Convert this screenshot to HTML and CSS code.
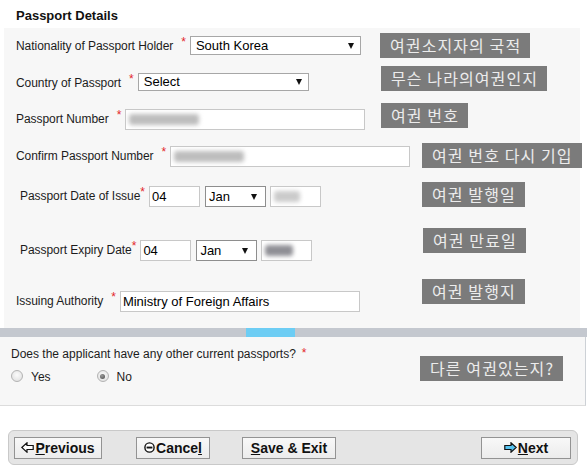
FILE: index.html
```html
<!DOCTYPE html>
<html lang="en">
<head>
<meta charset="utf-8">
<title>Passport Details</title>
<link rel="stylesheet" href="styles.css">
</head>
<body>
<h2 class="title">Passport Details</h2>

<div class="panel">
  <div class="row row-1">
    <span class="label">Nationality of Passport Holder</span><span class="req">*</span>
    <div class="field select select-wide"><span>South Korea</span><i class="caret"></i></div>
    <span class="note note-1">여권소지자의 국적</span>
  </div>

  <div class="row row-2">
    <span class="label">Country of Passport</span><span class="req">*</span>
    <div class="field select select-wide select-short"><span>Select</span><i class="caret"></i></div>
    <span class="note note-2">무슨 나라의여권인지</span>
  </div>

  <div class="row row-3">
    <span class="label">Passport Number</span><span class="req">*</span>
    <div class="field input-wide"><span class="blur"></span></div>
    <span class="note note-3">여권 번호</span>
  </div>

  <div class="row row-4">
    <span class="label">Confirm Passport Number</span><span class="req">*</span>
    <div class="field input-wide"><span class="blur"></span></div>
    <span class="note note-4">여권 번호 다시 기입</span>
  </div>

  <div class="row row-5">
    <span class="label label-indent">Passport Date of Issue</span><span class="req req-tight">*</span>
    <div class="field date-day">04</div>
    <div class="field select date-month"><span>Jan</span><i class="caret"></i></div>
    <div class="field date-year"><span class="blur blur-year"></span></div>
    <span class="note note-5">여권 발행일</span>
  </div>

  <div class="row row-6">
    <span class="label label-indent">Passport Expiry Date</span><span class="req req-tight">*</span>
    <div class="field date-day">04</div>
    <div class="field select date-month"><span>Jan</span><i class="caret"></i></div>
    <div class="field date-year"><span class="blur blur-year blur-dark"></span></div>
    <span class="note note-6">여권 만료일</span>
  </div>

  <div class="row row-7">
    <span class="label">Issuing Authority</span><span class="req">*</span>
    <div class="field input-wide">Ministry of Foreign Affairs</div>
    <span class="note note-7">여권 발행지</span>
  </div>
</div>

<div class="progress"><div class="progress-fill"></div></div>

<div class="panel-q">
  <div class="question">Does the applicant have any other current passports?<span class="req req-q">*</span></div>
  <div class="radios">
    <span class="radio"></span><span class="radio-text radio-text-yes">Yes</span>
    <span class="radio radio-checked"></span><span class="radio-text">No</span>
  </div>
  <span class="note note-8">다른 여권있는지?</span>
</div>

<div class="actions">
  <button class="btn btn-prev">
    <svg width="13" height="11" viewBox="0 0 13 11"><path d="M0.8 5.5 L6 0.8 V3.5 H12.2 V7.5 H6 V10.2 Z" fill="#fff" stroke="#111" stroke-width="1.2" stroke-linejoin="miter"/></svg><span><u>P</u>revious</span>
  </button>
  <button class="btn btn-cancel">
    <svg width="11" height="11" viewBox="0 0 11 11"><circle cx="5.5" cy="5.5" r="4.6" fill="#fff" stroke="#111" stroke-width="1.4"/><rect x="2.6" y="4.6" width="5.8" height="1.9" fill="#111"/></svg><span>Cance<u>l</u></span>
  </button>
  <button class="btn btn-save"><span><u>S</u>ave &amp; Exit</span></button>
  <button class="btn btn-next">
    <svg width="13" height="11" viewBox="0 0 13 11"><path d="M12.2 5.5 L7 0.8 V3.5 H0.8 V7.5 H7 V10.2 Z" fill="#56c3f0" stroke="#111" stroke-width="1.2" stroke-linejoin="miter"/></svg><span><u>N</u>ext</span>
  </button>
</div>
</body>
</html>
```

FILE: styles.css
```css
* { box-sizing: border-box; }

html, body {
  margin: 0;
  padding: 0;
}

body {
  width: 587px;
  height: 470px;
  overflow: hidden;
  background: #ffffff;
  font-family: "Liberation Sans", Arial, sans-serif;
  color: #1c1c1c;
}

.title {
  margin: 0;
  height: 28px;
  padding: 8px 0 0 16px;
  font-size: 13px;
  line-height: 16px;
  font-weight: bold;
  color: #111;
}

/* ---------- main form panel ---------- */
.panel {
  margin: 0 7px 0 4px;
  height: 300px;
  padding: 8px 0 0 12px;
  background: #f7f7f7;
}

.row {
  position: relative;
  display: flex;
  align-items: flex-start;
}

.row-1 { height: 37px; }
.row-2 { height: 36px; }
.row-3 { height: 37px; }
.row-4 { height: 40px; }
.row-5 { height: 54px; }
.row-6 { height: 51px; }
.row-7 { height: 21px; }

.label {
  font-size: 12px;
  line-height: 14px;
  letter-spacing: -0.05px;
  padding-top: 3px;
  white-space: nowrap;
}

.label-indent { margin-left: 4px; }

.req {
  color: #e3262b;
  font-size: 12px;
  line-height: 12px;
  margin: 0 4px 0 8px;
}

.req-tight { margin: 0 4px 0 0; }

.field {
  height: 21px;
  border: 1px solid #c8c8c8;
  background: #ffffff;
  font-size: 13px;
  line-height: 19px;
  padding: 0 2px;
  color: #000;
  white-space: nowrap;
  overflow: hidden;
}

.select {
  display: flex;
  align-items: center;
  justify-content: space-between;
  border-color: #a7a7a7;
  padding: 0 6px 0 5px;
}

.select-wide { width: 171px; height: 19px; line-height: 17px; }
.select-short { height: 18px; line-height: 16px; }

.caret {
  width: 0;
  height: 0;
  border-left: 3.5px solid transparent;
  border-right: 3.5px solid transparent;
  border-top: 6px solid #111;
}

.input-wide { width: 240px; display: flex; align-items: center; }

.date-day { width: 51px; }
.date-month { width: 61px; margin-left: 5px; border-color: #8e8e8e; padding: 0 8px 0 3px; }
.date-year { width: 51px; margin-left: 4px; display: flex; align-items: center; }

.blur {
  display: inline-block;
  width: 70px;
  height: 11px;
  margin-left: 1px;
  background: #bdbdbd;
  border-radius: 3px;
  filter: blur(2.2px);
}

.blur-year { width: 26px; background: #cbcbcb; }
.blur-dark { width: 28px; background: #8f8f95; }

/* ---------- annotation badges ---------- */
.note {
  position: absolute;
  height: 25px;
  line-height: 25px;
  padding: 0 9px 0 10px;
  background: #7b7b7b;
  color: #ececec;
  font-family: "Noto Sans CJK KR", "Noto Sans", sans-serif;
  font-size: 16px;
  font-weight: 400;
  letter-spacing: 1.1px;
  white-space: nowrap;
}

.note-1 { left: 364px; top: -3px; }
.note-2 { left: 365px; top: -7px; }
.note-3 { left: 365px; top: -6px; }
.note-4 { left: 406px; top: -3px; }
.note-5 { left: 406px; top: -4px; }
.note-6 { left: 407px; top: -12px; }
.note-7 { left: 406px; top: -12px; }
.note-8 { left: 420px; top: 19px; }

/* ---------- progress strip ---------- */
.progress {
  height: 9px;
  background: #c4c8cf;
}

.progress-fill {
  margin-left: 246px;
  width: 49px;
  height: 100%;
  background: #6dcdf4;
}

/* ---------- question panel ---------- */
.panel-q {
  position: relative;
  margin-right: 1px;
  height: 69px;
  padding: 10px 0 0 11px;
  background: #f7f7f7;
  border-right: 1px solid #cdd1d6;
  border-bottom: 1px solid #dcdcdc;
}

.question {
  font-size: 12px;
  line-height: 14px;
}

.req-q { margin: 0 0 0 6px; vertical-align: top; }

.radios {
  display: flex;
  align-items: center;
  margin-top: 7px;
  font-size: 12px;
  line-height: 14px;
}

.radio {
  position: relative;
  width: 12px;
  height: 12px;
  border-radius: 50%;
  border: 1px solid #b3b3b3;
  background: radial-gradient(circle at 50% 40%, #fbfbfb, #dcdcdc);
}

.radio-checked::after {
  content: "";
  position: absolute;
  left: 2.5px;
  top: 2.5px;
  width: 5px;
  height: 5px;
  border-radius: 50%;
  background: radial-gradient(circle at 40% 35%, #9a9a9a, #4a4a4a);
}

.radio-text { margin: 2px 0 0 8px; }
.radio-text-yes { margin-right: 46px; }

/* ---------- action bar ---------- */
.actions {
  display: flex;
  align-items: center;
  margin: 24px 9px 0 8px;
  height: 35px;
  padding: 0 6px 0 5px;
  background: #e5e5e5;
  border: 1px solid #c9c9c9;
  border-radius: 6px;
}

.btn {
  display: flex;
  align-items: center;
  justify-content: center;
  gap: 1px;
  height: 22px;
  padding: 0;
  border: 1px solid #939393;
  background: linear-gradient(#f8f8f8, #ececec);
  font-family: "Liberation Sans", Arial, sans-serif;
  font-size: 14px;
  font-weight: bold;
  color: #111;
}

.btn-prev { width: 88px; }
.btn-cancel { width: 74px; margin-left: 34px; }
.btn-save { width: 94px; margin-left: 32px; }
.btn-next { width: 90px; margin-left: auto; }
```
